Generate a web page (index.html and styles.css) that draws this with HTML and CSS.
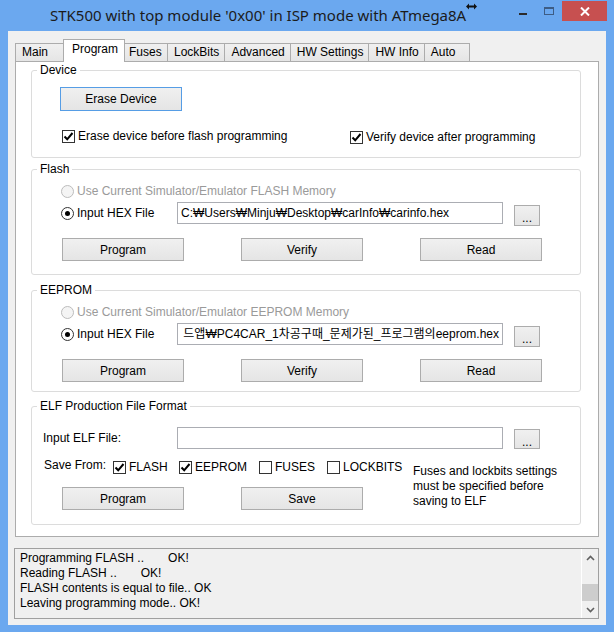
FILE: index.html
```html
<!DOCTYPE html>
<html lang="ko">
<head>
    <meta charset="UTF-8">
    <title>STK500</title>
    <link rel="stylesheet" href="styles.css">
</head>
<body>
<div class="window">
    <div class="titlebar">
        <span class="title">STK500 with top module '0x00' in ISP mode with ATmega8A</span>
        <svg class="cursor" width="11" height="7" viewBox="0 0 11 7"><path d="M0 3.5 L3 0.5 L3 2.5 L8 2.5 L8 0.5 L11 3.5 L8 6.5 L8 4.5 L3 4.5 L3 6.5 Z" fill="#111"/></svg>
        <div class="caption">
            <div class="cap-btn cap-min"><span></span></div>
            <div class="cap-btn cap-max"><span></span></div>
            <div class="cap-btn cap-close">
                <svg width="10" height="9" viewBox="0 0 10 9"><path d="M1 0.5 L9 8.5 M9 0.5 L1 8.5" stroke="#fff" stroke-width="2"/></svg>
            </div>
        </div>
    </div>

    <div class="client">
        <div class="tabs">
            <div class="tab">Main</div>
            <div class="tab active">Program</div>
            <div class="tab">Fuses</div>
            <div class="tab">LockBits</div>
            <div class="tab">Advanced</div>
            <div class="tab">HW Settings</div>
            <div class="tab">HW Info</div>
            <div class="tab">Auto</div>
        </div>

        <div class="panel">
            <!-- Device -->
            <fieldset class="group device">
                <legend>Device</legend>
                <button class="btn btn-erase">Erase Device</button>
                <div class="device-checks">
                    <label class="check"><span class="box"><svg width="11" height="11" viewBox="0 0 11 11"><path d="M1.5 5.5 L4.2 8.3 L9.5 2" stroke="#000" stroke-width="2" fill="none"/></svg></span>Erase device before flash programming</label>
                    <label class="check check-verify"><span class="box"><svg width="11" height="11" viewBox="0 0 11 11"><path d="M1.5 5.5 L4.2 8.3 L9.5 2" stroke="#000" stroke-width="2" fill="none"/></svg></span>Verify device after programming</label>
                </div>
            </fieldset>

            <!-- Flash -->
            <fieldset class="group flash">
                <legend>Flash</legend>
                <label class="radio-row disabled"><span class="radio"></span>Use Current Simulator/Emulator FLASH Memory</label>
                <div class="hex-row">
                    <label class="hex-label"><span class="radio on"></span>Input HEX File</label>
                    <div class="textbox">C:₩Users₩Minju₩Desktop₩carInfo₩carinfo.hex</div>
                    <button class="btn btn-browse">...</button>
                </div>
                <div class="btn-row">
                    <button class="btn">Program</button>
                    <button class="btn">Verify</button>
                    <button class="btn">Read</button>
                </div>
            </fieldset>

            <!-- EEPROM -->
            <fieldset class="group eeprom">
                <legend>EEPROM</legend>
                <label class="radio-row disabled"><span class="radio"></span>Use Current Simulator/Emulator EEPROM Memory</label>
                <div class="hex-row">
                    <label class="hex-label"><span class="radio on"></span>Input HEX File</label>
                    <div class="textbox scrolled"><span>드앱₩PC4CAR_1차공구때_문제가된_프로그램의eeprom.hex</span></div>
                    <button class="btn btn-browse">...</button>
                </div>
                <div class="btn-row">
                    <button class="btn">Program</button>
                    <button class="btn">Verify</button>
                    <button class="btn">Read</button>
                </div>
            </fieldset>

            <!-- ELF -->
            <fieldset class="group elf">
                <legend>ELF Production File Format</legend>
                <div class="hex-row elf-row">
                    <span class="elf-label">Input ELF File:</span>
                    <div class="textbox"></div>
                    <button class="btn btn-browse">...</button>
                </div>
                <div class="elf-bottom">
                    <div class="elf-left">
                        <div class="save-row">
                            <span>Save From:</span>
                            <label class="check"><span class="box"><svg width="11" height="11" viewBox="0 0 11 11"><path d="M1.5 5.5 L4.2 8.3 L9.5 2" stroke="#000" stroke-width="2" fill="none"/></svg></span>FLASH</label>
                            <label class="check"><span class="box"><svg width="11" height="11" viewBox="0 0 11 11"><path d="M1.5 5.5 L4.2 8.3 L9.5 2" stroke="#000" stroke-width="2" fill="none"/></svg></span>EEPROM</label>
                            <label class="check"><span class="box"></span>FUSES</label>
                            <label class="check"><span class="box"></span>LOCKBITS</label>
                        </div>
                        <div class="btn-row">
                            <button class="btn">Program</button>
                            <button class="btn">Save</button>
                        </div>
                    </div>
                    <p class="note">Fuses and lockbits settings<br>must be specified before<br>saving to ELF</p>
                </div>
            </fieldset>
        </div>

        <div class="log">
            <div class="log-text">
                <div>Programming FLASH ..<span class="ok">OK!</span></div>
                <div>Reading FLASH ..<span class="ok">OK!</span></div>
                <div>FLASH contents is equal to file.. OK</div>
                <div>Leaving programming mode.. OK!</div>
            </div>
            <div class="scrollbar">
                <div class="sb-arrow"><svg width="9" height="6" viewBox="0 0 9 6"><path d="M1 5 L4.5 1.5 L8 5" stroke="#606060" stroke-width="1.6" fill="none"/></svg></div>
                <div class="sb-track"><div class="sb-thumb"></div></div>
                <div class="sb-arrow"><svg width="9" height="6" viewBox="0 0 9 6"><path d="M1 1 L4.5 4.5 L8 1" stroke="#606060" stroke-width="1.6" fill="none"/></svg></div>
            </div>
        </div>
    </div>
</div>
</body>
</html>
```

FILE: styles.css
```css
* {
    box-sizing: border-box;
}
html, body {
    margin: 0;
}
body {
    width: 614px;
    height: 632px;
    overflow: hidden;
    font-family: "Liberation Sans", "Noto Sans CJK KR", sans-serif;
    font-size: 12px;
    color: #000;
}
.window {
    width: 614px;
    height: 632px;
    background: #6ba8ef;
    padding: 0 8px 7px 8px;
    display: flex;
    flex-direction: column;
}

/* title bar */
.titlebar {
    height: 31px;
    display: flex;
    align-items: flex-start;
}
.title {
    margin: 5px 0 0 42px;
    font-family: "Noto Sans", sans-serif;
    font-size: 15px;
    line-height: 20px;
    color: #1b1b1b;
}
.cursor {
    margin-top: 3px;
}
.caption {
    margin: 1px -1px 0 auto;
    display: flex;
}
.cap-btn {
    width: 26px;
    height: 20px;
    display: flex;
    justify-content: center;
}
.cap-min span {
    margin-top: 12px;
    width: 8px;
    height: 2px;
    background: #2b2b2b;
}
.cap-max span {
    margin-top: 6px;
    width: 10px;
    height: 8px;
    border: 1px solid #3d5c84;
    border-top-width: 2px;
}
.cap-close {
    width: 45px;
    background: #c75050;
    align-items: center;
}

/* client area */
.client {
    flex: 1;
    background: #f0f0f0;
    padding: 8px 7px 0 7px;
    display: flex;
    flex-direction: column;
}
.tabs {
    display: flex;
    align-items: flex-end;
    height: 22px;
    padding-left: 1px;
}
.tab {
    height: 18px;
    min-width: 46px;
    margin-left: -1px;
    padding: 0 5px 0 6px;
    border: 1px solid #acacac;
    border-bottom: none;
    background: linear-gradient(#f0f0f0, #e5e5e5);
    line-height: 17px;
}
.tab:first-child {
    min-width: 49px;
}
.tab.active {
    position: relative;
    z-index: 1;
    height: 23px;
    margin: 0 -2px -1px -1px;
    padding: 0 6px 0 8px;
    background: #fff;
    line-height: 19px;
}
.panel {
    height: 476px;
    border: 1px solid #acacac;
    background: #fff;
    padding: 0 17px 0 15px;
}

/* group boxes */
.group {
    margin: 0;
    padding: 0;
    min-width: 0;
    border: 1px solid #dcdcdc;
    border-radius: 3px;
}
.group legend {
    margin-left: 5px;
    padding: 0 3px;
    line-height: 16px;
}
.device {
    height: 96px;
}
.flash {
    height: 114px;
    margin-top: 3px;
}
.eeprom {
    height: 110px;
    margin-top: 7px;
}
.elf {
    height: 127px;
    margin-top: 6px;
}

.btn {
    font-family: inherit;
    font-size: 12px;
    color: #000;
    width: 122px;
    height: 23px;
    padding: 0;
    border: 1px solid #acacac;
    background: linear-gradient(#f0f0f0, #e5e5e5);
}
.btn-erase {
    margin: 9px 0 0 28px;
    height: 24px;
    border-color: #569de5;
}
.btn-browse {
    width: 26px;
    height: 21px;
    margin: 3px 0 0 11px;
    align-self: flex-start;
    line-height: 24px;
}

.check {
    display: flex;
    align-items: center;
    gap: 3px;
    line-height: 16px;
}
.box {
    width: 13px;
    height: 13px;
    border: 1px solid #333;
    background: #fff;
    display: flex;
}
.device-checks {
    display: grid;
    grid-template-columns: 288px auto;
    margin-top: 16px;
    padding-left: 30px;
}
.check-verify {
    margin-top: 2px;
}

.radio {
    width: 13px;
    height: 13px;
    border: 1px solid #333;
    border-radius: 50%;
    background: #fff;
    display: flex;
    align-items: center;
    justify-content: center;
    margin-right: 3px;
}
.radio.on::after {
    content: "";
    width: 5px;
    height: 5px;
    border-radius: 50%;
    background: #000;
}
.radio-row {
    display: flex;
    align-items: center;
    line-height: 16px;
    margin-top: 6px;
    padding-left: 29px;
}
.radio-row.disabled {
    color: #9a9a9a;
}
.radio-row.disabled .radio {
    border-color: #bcbcbc;
    background: #f4f4f4;
}
.hex-row {
    display: flex;
    align-items: center;
    height: 22px;
    margin-top: 3px;
    padding-left: 29px;
}
.hex-label {
    display: flex;
    align-items: center;
    width: 116px;
}
.textbox {
    width: 326px;
    height: 22px;
    border: 1px solid #abadb3;
    background: #fff;
    padding: 0 3px;
    line-height: 20px;
    white-space: nowrap;
    overflow: hidden;
}
.textbox.scrolled {
    display: flex;
    justify-content: flex-end;
}
.btn-row {
    display: flex;
    gap: 57px;
    margin-top: 14px;
    padding-left: 30px;
}

/* ELF */
.elf-row {
    margin-top: 13px;
    padding-left: 11px;
}
.elf-label {
    width: 134px;
}
.elf-row .btn-browse {
    height: 20px;
    margin-top: 2px;
}
.elf-bottom {
    display: flex;
    margin-top: 8px;
}
.elf-left {
    width: 381px;
}
.save-row {
    display: grid;
    grid-template-columns: 69px 66px 80px 68px auto;
    align-items: start;
    padding-left: 12px;
    line-height: 16px;
}
.save-row .check {
    margin-top: 2px;
}
.elf-left .btn-row {
    margin-top: 12px;
}
.note {
    margin: 7px 0 0 0;
    line-height: 15px;
}

/* output log */
.log {
    height: 71px;
    margin: 11px 0 0 -1px;
    border: 1px solid #a0a0a0;
    display: flex;
}
.log-text {
    flex: 1;
    padding: 2px 0 0 5px;
    line-height: 15px;
}
.ok {
    margin-left: 24px;
}
.scrollbar {
    width: 17px;
    border-left: 1px solid #fff;
    display: flex;
    flex-direction: column;
}
.sb-arrow {
    height: 17px;
    display: flex;
    align-items: center;
    justify-content: center;
}
.sb-track {
    flex: 1;
    display: flex;
    flex-direction: column;
    justify-content: flex-end;
}
.sb-thumb {
    height: 17px;
    background: #cdcdcd;
}
```
